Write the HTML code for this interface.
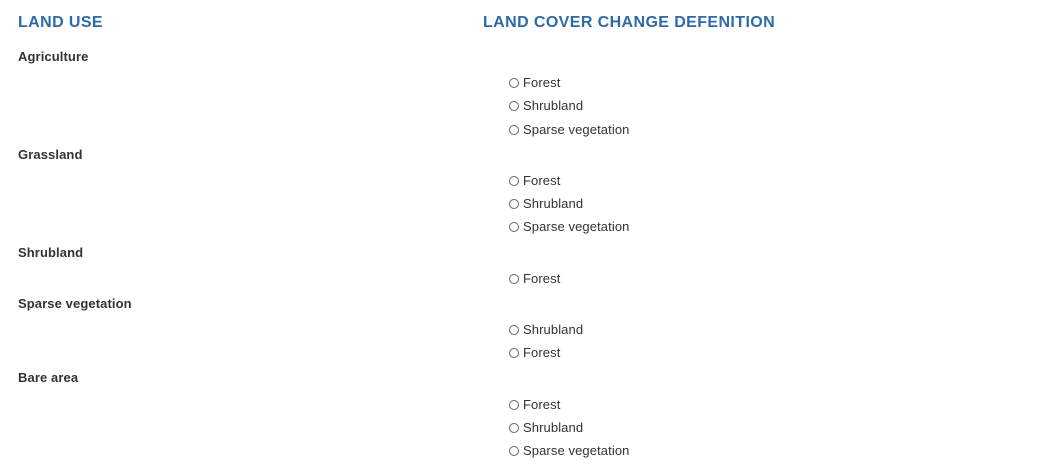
<!DOCTYPE html>
<html><head><style>
body{margin:0;width:1041px;height:474px;background:#fff;font-family:"Liberation Sans",Arial,sans-serif;position:relative;overflow:hidden}
.h{position:absolute;top:12px;font-size:16px;font-weight:bold;color:#2d6aa8;line-height:20px;letter-spacing:0.4px}
.l{position:absolute;left:18px;font-size:13px;font-weight:bold;color:#333;line-height:16px;letter-spacing:0.1px}
.r{position:absolute;left:509px;font-size:13px;color:#333;line-height:16px;display:flex;align-items:center;letter-spacing:0.1px}
.r i{display:inline-block;width:8px;height:8px;border:1px solid #666;border-radius:50%;margin-right:4px}
</style></head><body>
<div class="h" style="left:18px;top:13px">LAND USE</div>
<div class="h" style="left:483px;top:13px">LAND COVER CHANGE DEFENITION</div>
<div class="l" style="top:49px">Agriculture</div>
<div class="r" style="top:75px"><i></i>Forest</div>
<div class="r" style="top:98px"><i></i>Shrubland</div>
<div class="r" style="top:122px"><i></i>Sparse vegetation</div>
<div class="l" style="top:147px">Grassland</div>
<div class="r" style="top:173px"><i></i>Forest</div>
<div class="r" style="top:196px"><i></i>Shrubland</div>
<div class="r" style="top:219px"><i></i>Sparse vegetation</div>
<div class="l" style="top:245px">Shrubland</div>
<div class="r" style="top:271px"><i></i>Forest</div>
<div class="l" style="top:296px">Sparse vegetation</div>
<div class="r" style="top:322px"><i></i>Shrubland</div>
<div class="r" style="top:345px"><i></i>Forest</div>
<div class="l" style="top:370px">Bare area</div>
<div class="r" style="top:397px"><i></i>Forest</div>
<div class="r" style="top:420px"><i></i>Shrubland</div>
<div class="r" style="top:443px"><i></i>Sparse vegetation</div>
</body></html>
